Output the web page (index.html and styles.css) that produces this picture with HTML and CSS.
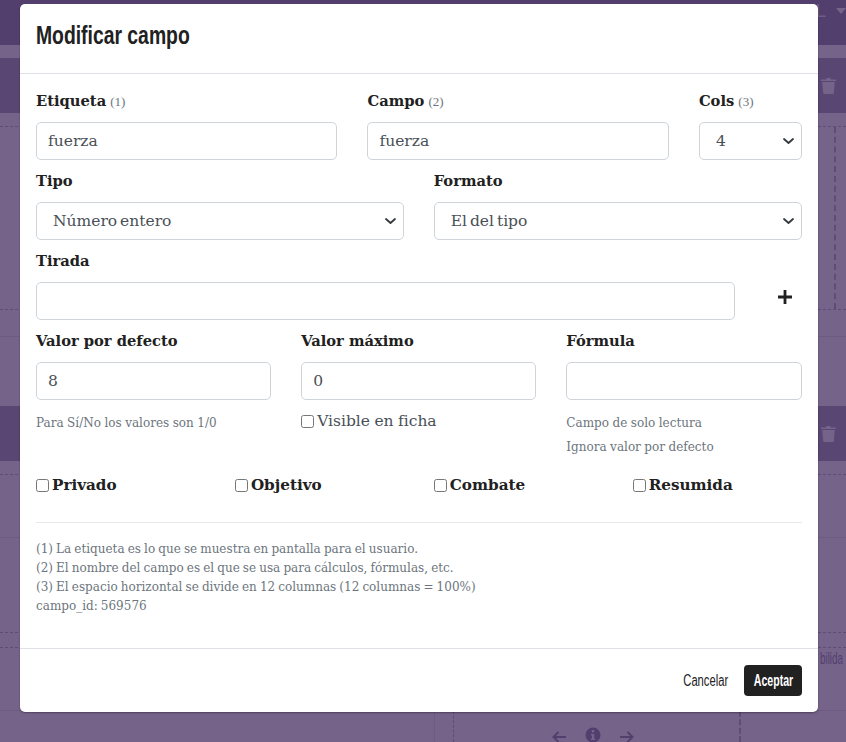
FILE: index.html
```html
<!DOCTYPE html>
<html lang="es">
<head>
<meta charset="utf-8">
<title>Modificar campo</title>
<link rel="stylesheet" href="styles.css">
</head>
<body>
<div class="page">
  <header class="topbar">
    <span class="topbar-text">SOLO POR INTERNET</span>
    <span class="topbar-user">USUARIO L</span>
    <svg class="caret" width="10" height="6" viewBox="0 0 10 6"><path d="M0 0h10L5 6z"/></svg>
  </header>
  <div class="bar first">
    <svg class="trash" width="15" height="17" viewBox="0 0 15 17"><path d="M0 2.500h5L5.600 1h3.800l.6 1.500h5v1.500H0zM1.200 5h12.600l-1 11a1 1 0 0 1-1 1H3.200a1 1 0 0 1-1-1z"/></svg>
  </div>
  <div class="slot"><div class="vline"></div></div>
  <div class="plain"></div>
  <div class="bar">
    <svg class="trash" width="15" height="17" viewBox="0 0 15 17"><path d="M0 2.500h5L5.600 1h3.800l.6 1.500h5v1.500H0zM1.200 5h12.600l-1 11a1 1 0 0 1-1 1H3.200a1 1 0 0 1-1-1z"/></svg>
  </div>
  <div class="slot2"></div>
  <div class="slot3"></div>
  <div class="slot4"><div class="cut"><span class="cut-text">bilida</span></div></div>
  <div class="foot">
    <div class="foot-line a"></div>
    <div class="foot-line b"></div>
    <div class="foot-line c"></div>
  </div>
  <nav class="pager">
    <svg class="arrow" width="14" height="12" viewBox="0 0 14 12"><path d="M6.500 1L1.500 6l5 5M2 6h12"/></svg>
    <svg class="info" width="16" height="16" viewBox="0 0 16 16"><circle cx="8" cy="8" r="7.500"/><rect class="hole" x="6.800" y="3" width="2.400" height="2.400"/><path class="hole" d="M6 7h3.200v4.500h1v1.500H5.800v-1.500H7V8.500H6z"/></svg>
    <svg class="arrow" width="14" height="12" viewBox="0 0 14 12"><path d="M7.500 1l5 5-5 5M12 6H0"/></svg>
  </nav>
</div>

<section class="modal">
  <header class="modal-header">
    <h1 class="modal-title">Modificar campo</h1>
  </header>
  <form class="modal-body">
    <div class="row">
      <div class="c5"><label class="lbl">Etiqueta <small class="ref">(1)</small></label><input class="ctl" type="text" value="fuerza"></div>
      <div class="c5"><label class="lbl">Campo <small class="ref">(2)</small></label><input class="ctl" type="text" value="fuerza"></div>
      <div class="c2"><label class="lbl">Cols <small class="ref">(3)</small></label><select class="ctl sel"><option>4</option></select></div>
    </div>
    <div class="row">
      <div class="c6"><label class="lbl">Tipo</label><select class="ctl sel"><option>Número entero</option></select></div>
      <div class="c6"><label class="lbl">Formato</label><select class="ctl sel"><option>El del tipo</option></select></div>
    </div>
    <div class="row">
      <div class="c11"><label class="lbl">Tirada</label><input class="ctl" type="text"></div>
      <div class="c1 plus-cell"><svg class="plus" width="14" height="14" viewBox="0 0 14 14"><path d="M5.600 0h2.800v5.600H14v2.800H8.400V14H5.600V8.400H0V5.600h5.600z"/></svg></div>
    </div>
    <div class="row">
      <div class="c4"><label class="lbl">Valor por defecto</label><input class="ctl" type="text" value="8"><p class="hint first">Para Sí/No los valores son 1/0</p></div>
      <div class="c4"><label class="lbl">Valor máximo</label><input class="ctl" type="text" value="0"><label class="vis"><input class="chk" type="checkbox">Visible en ficha</label></div>
      <div class="c4"><label class="lbl">Fórmula</label><input class="ctl" type="text"><p class="hint first">Campo de solo lectura</p><p class="hint">Ignora valor por defecto</p></div>
    </div>
    <div class="row checks">
      <label class="c3 flag"><input class="chk" type="checkbox">Privado</label>
      <label class="c3 flag"><input class="chk" type="checkbox">Objetivo</label>
      <label class="c3 flag"><input class="chk" type="checkbox">Combate</label>
      <label class="c3 flag"><input class="chk" type="checkbox">Resumida</label>
    </div>
    <hr class="rule">
    <div class="notes">
      <div>(1) La etiqueta es lo que se muestra en pantalla para el usuario.</div>
      <div>(2) El nombre del campo es el que se usa para cálculos, fórmulas, etc.</div>
      <div>(3) El espacio horizontal se divide en 12 columnas (12 columnas = 100%)</div>
      <div>campo_id: 569576</div>
    </div>
  </form>
  <footer class="modal-footer">
    <button class="btn link" type="button"><span class="narrow">Cancelar</span></button>
    <button class="btn dark" type="button"><span class="narrow">Aceptar</span></button>
  </footer>
</section>
</body>
</html>
```
FILE: styles.css
```css
* { box-sizing: border-box; }
html, body { margin: 0; height: 100%; overflow: hidden; }
body { background: #75638a; font-family: "DejaVu Serif", serif; color: #212121; }

/* page behind the dialog */
.page { height: 742px; display: flex; flex-direction: column; overflow: hidden; }
.topbar { flex: none; height: 45px; background: #533f6d; display: flex; justify-content: flex-end; align-items: flex-start; color: #6f5d87; font-family: "Liberation Sans", sans-serif; }
.topbar-text { font-size: 14px; line-height: 18px; margin-right: 52px; margin-top: 0; }
.topbar-user { font-size: 19px; line-height: 20px; margin-top: 1px; margin-right: 10px; font-weight: 300; white-space: nowrap; }
.caret { fill: #75638a; margin-top: 8px; flex: none; }
.bar { flex: none; height: 55px; background: #5a4672; display: flex; justify-content: flex-end; align-items: center; padding-right: 10px; }
.bar.first { margin-top: 13px; }
.trash { fill: #75638a; }
.slot { flex: none; margin-top: 13px; height: 184px; border-top: 1px dashed #5f4d75; border-bottom: 1px dashed #5f4d75; }
.vline { margin-left: 834px; height: 100%; border-left: 2px dashed #5f4d75; }
.plain { flex: none; margin-top: 26px; height: 70px; border-top: 1px solid #6d5b82; }
.slot2 { flex: none; margin-top: 13px; height: 63px; border-top: 1px dashed #5f4d75; }
.slot3 { flex: none; height: 95px; border-top: 1px solid #6d5b82; }
.slot4 { flex: none; height: 78px; border-top: 1px dashed #5f4d75; padding-top: 14px; }
.cut { border-top: 1px dashed #5f4d75; padding: 1px 0 0 820px; color: #533f6d; font: 17px/20px "Liberation Sans", sans-serif; white-space: nowrap; }
.cut-text { display: inline-block; transform: scaleX(.58); transform-origin: left center; }
.foot { flex: 1; border-top: 1px solid #6d5b82; position: relative; }
.foot-line { position: absolute; top: 0; bottom: 0; }
.foot-line.a { left: 434px; border-left: 1px solid #6d5b82; }
.foot-line.b { left: 453px; border-left: 1px dashed #5f4d75; }
.foot-line.c { left: 739px; border-left: 2px dashed #5f4d75; }
.pager { position: absolute; top: 727px; left: 552px; display: flex; align-items: flex-end; gap: 19px; }
.arrow { fill: none; stroke: #533f6d; stroke-width: 2; margin-top: 3px; }
.info { fill: #533f6d; }
.info .hole { fill: #75638a; }

/* dialog */
.modal { position: absolute; left: 20px; top: 4px; width: 798px; height: 708px; background: #fff; border-radius: 5px; box-shadow: 0 1px 2px rgba(0,0,0,.35); display: flex; flex-direction: column; }
.modal-header { flex: none; height: 70px; border-bottom: 1px solid #dee2e6; padding: 16px; }
.modal-title { margin: 0; font: 700 26.500px/30px "Liberation Sans", sans-serif; color: #212121; transform: scaleX(.73); transform-origin: left center; white-space: nowrap; }
.modal-body { flex: 1; padding: 16px 16.500px 16px 16px; }
.row { display: grid; grid-template-columns: repeat(12, 1fr); column-gap: 30px; margin-bottom: 10px; }
.c1 { grid-column: span 1; } .c2 { grid-column: span 2; } .c3 { grid-column: span 3; }
.c4 { grid-column: span 4; } .c5 { grid-column: span 5; } .c6 { grid-column: span 6; } .c11 { grid-column: span 11; }
.lbl { display: block; height: 24px; font-size: 14.700px; line-height: 22px; font-weight: 700; margin-bottom: 8px; white-space: nowrap; }
.ref { font: 400 13px/16px "Liberation Serif", serif; color: #6c757d; margin-left: -1px; }
.ctl { display: block; width: 100%; height: 38px; border: 1px solid #ced4da; border-radius: 5px; background: #fff; color: #495057; font: 15.500px "DejaVu Serif", serif; word-spacing: -2px; padding: 0 11px; outline: none; }
.sel { appearance: none; padding: 0 16px; background: #fff url("data:image/svg+xml,%3Csvg xmlns='http://www.w3.org/2000/svg' viewBox='0 0 11 6'%3E%3Cpath fill='none' stroke='%23343a40' stroke-linecap='round' stroke-linejoin='round' stroke-width='1.800' d='M1 1l4.500 4L10 1'/%3E%3C/svg%3E") no-repeat right 7px center / 11px 6px; }
.plus-cell { display: flex; align-items: flex-start; justify-content: center; padding: 40px 0 0 4px; }
.plus { fill: #212121; }
.hint { margin: 0; font-size: 12px; line-height: 24px; color: #6c757d; white-space: nowrap; word-spacing: -.3px; }
.hint.first { margin-top: 11px; }
.vis { display: flex; align-items: center; margin-top: 9px; font-size: 15.500px; word-spacing: -.5px; line-height: 24px; color: #495057; white-space: nowrap; }
.chk { flex: none; width: 13px; height: 13px; margin: 0 3px 0 0; }
.row.checks { margin-top: 14px; margin-bottom: 0; }
.flag { display: flex; align-items: center; font-size: 15.200px; font-weight: 700; line-height: 24px; }
.rule { border: 0; border-top: 1px solid #e6e8ec; margin: 25px 0 17px; }
.notes { font-size: 12px; line-height: 19px; color: #6c757d; word-spacing: -.7px; }
.modal-footer { flex: none; height: 64px; border-top: 1px solid #dee2e6; padding: 16px; display: flex; justify-content: flex-end; align-items: flex-start; gap: 8px; }
.btn { height: 31px; padding: 0; border: 0; border-radius: 4px; font: 16px/31px "Liberation Sans", sans-serif; background: none; color: #212121; overflow: visible; }
.btn.link { width: 62px; }
.btn.dark { width: 58px; background: #212121; color: #fff; font-weight: 700; }
.narrow { display: block; white-space: nowrap; transform: scaleX(.7); }
.dark .narrow { transform: scaleX(.66); }
```
